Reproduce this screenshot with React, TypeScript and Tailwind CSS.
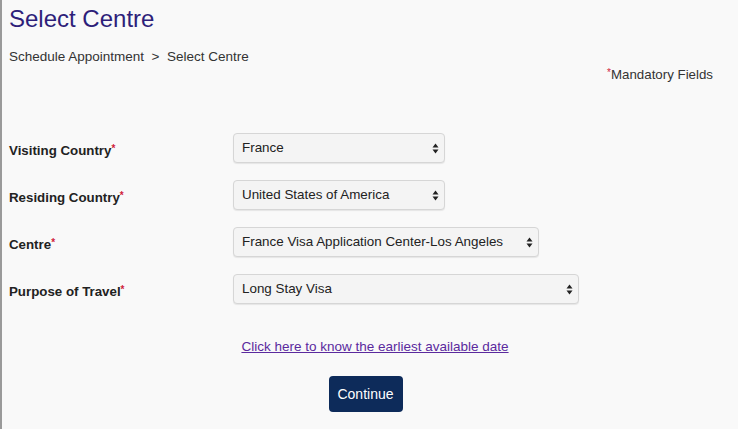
import React from "react";

function Arrows() {
  return (
    <svg width="7" height="11" viewBox="0 0 7 11" className="shrink-0">
      <path d="M3.5 0.5 L6.5 4.5 L0.5 4.5 Z" fill="#222" />
      <path d="M3.5 10.5 L6.5 6.5 L0.5 6.5 Z" fill="#222" />
    </svg>
  );
}

function FakeSelect({ value, width }: { value: string; width: string }) {
  return (
    <div
      className={`${width} h-[30px] flex items-center justify-between pl-[8px] pr-[5px] bg-[#f4f4f4] border border-[#d6d6d6] rounded-[4px] shadow-[0_1px_1px_rgba(0,0,0,0.08)] text-[13.4px] text-[#222]`}
    >
      <span>{value}</span>
      <Arrows />
    </div>
  );
}

export default function App() {
  const rows = [
    { label: "Visiting Country", value: "France", width: "w-[212px]" },
    { label: "Residing Country", value: "United States of America", width: "w-[212px]" },
    { label: "Centre", value: "France Visa Application Center-Los Angeles", width: "w-[306px]" },
    { label: "Purpose of Travel", value: "Long Stay Visa", width: "w-[346px]" },
  ];

  return (
    <div
      className="w-[738px] h-[429px] bg-[#f9f9f9] border-l-2 border-[#9a9a9a] overflow-hidden"
      style={{ fontFamily: '"Liberation Sans", Arial, sans-serif' }}
    >
      <div className="pl-[7px] pr-[25px]">
        <h1 className="text-[24px] leading-none text-[#2e1f7a] pt-[7px]">Select Centre</h1>
        <div className="mt-[16px] text-[13.5px] text-[#333]">
          Schedule Appointment&nbsp; &gt; &nbsp;Select Centre
        </div>
        <div className="flex justify-end -mt-[2px] text-[13.3px] text-[#333]">
          <span>
            <span className="text-[#d0213b] text-[10px] align-top">*</span>Mandatory Fields
          </span>
        </div>

        <div className="mt-[48px] flex flex-col gap-[17px]">
          {rows.map((r) => (
            <div key={r.label} className="flex items-center">
              <div className="w-[224px] text-[13.3px] font-bold text-[#222] pt-[6px]">
                {r.label}
                <span className="text-[#d0213b] text-[10px] align-top">*</span>
              </div>
              <FakeSelect value={r.value} width={r.width} />
            </div>
          ))}
        </div>

        <div className="mt-[33px] flex justify-center pl-[28px]">
          <a className="text-[13.5px] text-[#5b2a9e] underline cursor-pointer">
            Click here to know the earliest available date
          </a>
        </div>
        <div className="mt-[19px] flex justify-center pl-[9px]">
          <button className="w-[74px] h-[36px] bg-[#0d2b5a] text-white text-[14px] font-medium rounded-[4px]">
            Continue
          </button>
        </div>
      </div>
    </div>
  );
}
